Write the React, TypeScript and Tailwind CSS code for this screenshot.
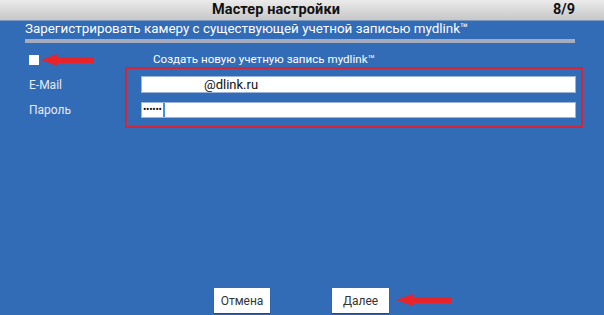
import React from "react";

function Arrow({ className }: { className: string }) {
  return (
    <svg className={className} viewBox="0 0 52 12" preserveAspectRatio="none">
      <polygon points="0,6 16,0 16,3 52,3 52,9 16,9 16,12" fill="#e8232a" />
    </svg>
  );
}

export default function App() {
  return (
    <div
      className="relative w-[604px] h-[315px] overflow-hidden flex flex-col bg-[#326bb6]"
      style={{ fontFamily: "Roboto, 'Liberation Sans', sans-serif" }}
    >
      <div className="h-[20px] flex items-center bg-gradient-to-b from-[#ececec] to-[#c6c6c6] text-[#111] font-bold text-[14.5px] leading-[20px] scale-y-[1.05]">
        <div className="pl-[212px] tracking-[0.1px]">Мастер настройки</div>
        <div className="ml-auto pr-[29px]">8/9</div>
      </div>
      <div className="px-[25px] pr-[29px] pt-[1px]">
        <div className="text-white text-[13.4px] leading-[16px]">
          Зарегистрировать камеру с существующей учетной записью mydlink™
        </div>
        <div className="mt-[2px] h-[4px] bg-[#a4acbd]" />
      </div>
      <div className="flex items-center mt-[11px] pl-[29px] h-[12px]">
        <div className="w-[10px] h-[10px] bg-white" />
        <div className="ml-[114px] text-white text-[11.6px]">Создать новую учетную запись mydlink™</div>
      </div>
      <div className="flex items-center mt-[10px] pl-[29px] pr-[28px] h-[17px]">
        <div className="w-[112px] text-[#e6ecf6] text-[12px]">E-Mail</div>
        <div className="flex-1 h-[17px] bg-white border border-[#9bb3d8] flex items-center text-[#111] text-[13px]">
          <span className="pl-[62px]">@dlink.ru</span>
        </div>
      </div>
      <div className="flex items-center mt-[9px] pl-[29px] pr-[28px] h-[16px]">
        <div className="w-[112px] text-[#e6ecf6] text-[12px]">Пароль</div>
        <div className="flex-1 h-[16px] bg-white border border-[#9bb3d8] flex items-center text-[#111]">
          <span className="pl-[1px] text-[10px] leading-[10px] tracking-[-0.25px]">••••••</span>
          <span className="ml-[1px] w-[2px] h-[14px] bg-[#4a90e2]" />
        </div>
      </div>
      <div className="mt-auto mb-[2px] flex pl-[214px] gap-[62px]">
        <button className="w-[56px] h-[25px] bg-white text-[#333] text-[12px] shadow-[0_1px_1px_rgba(0,0,0,0.3)]">Отмена</button>
        <button className="w-[57px] h-[25px] bg-white text-[#333] text-[12px] shadow-[0_1px_1px_rgba(0,0,0,0.3)]">Далее</button>
      </div>
      <div className="absolute left-[125px] top-[67px] w-[458px] h-[61px] border-2 border-[#d32536]" />
      <Arrow className="absolute left-[41px] top-[54px] w-[53px] h-[12px]" />
      <Arrow className="absolute left-[396px] top-[294px] w-[55px] h-[12px]" />
    </div>
  );
}
